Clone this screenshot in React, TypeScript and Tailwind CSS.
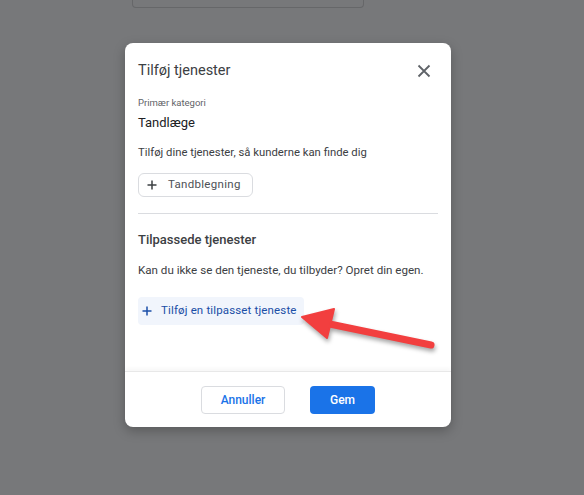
export default function App() {
  return (
    <div className="relative w-[584px] h-[495px] bg-[#77787a] overflow-hidden font-['Roboto',sans-serif]">
      <div className="ml-[132px] w-[232px] h-[8px] border border-t-0 border-[#666769] rounded-b-[4px]"></div>

      <div className="ml-[125px] mt-[35px] w-[326px] bg-white rounded-[8px] shadow-[0_4px_12px_rgba(0,0,0,0.25)]">
        <div className="px-[13px] pt-[18px] pb-[46px]">
          <div className="flex items-center justify-between h-5">
            <h2 className="text-[14.5px] leading-5 text-[#3c4043]">Tilføj tjenester</h2>
            <svg width="14" height="14" viewBox="0 0 14 14" className="mr-[7px]">
              <path d="M1.5 1.5 L12.5 12.5 M12.5 1.5 L1.5 12.5" stroke="#5f6368" strokeWidth="1.8" />
            </svg>
          </div>

          <p className="mt-[15px] text-[9.5px] leading-[14px] text-[#5f6368]">Primær kategori</p>
          <p className="mt-[3px] text-[13px] leading-5 text-[#202124]">Tandlæge</p>
          <p className="mt-[12px] text-[11.3px] leading-4 text-[#3c4043]">
            Tilføj dine tjenester, så kunderne kan finde dig
          </p>

          <div className="mt-[12px] flex">
            <div className="flex items-center h-6 pl-[8px] pr-[11px] border border-[#dadce0] rounded-[6px] gap-[11px]">
              <svg width="10" height="10" viewBox="0 0 10 10">
                <path d="M5 0.5 V9.5 M0.5 5 H9.5" stroke="#3c4043" strokeWidth="1.5" />
              </svg>
              <span className="text-[11.5px] text-[#4d5156] tracking-[0.3px]">Tandblegning</span>
            </div>
          </div>

          <div className="mt-[16px] h-px bg-[#dadce0]"></div>

          <h3 className="mt-[16px] text-[13px] leading-5 font-medium text-[#3c4043]">Tilpassede tjenester</h3>
          <p className="mt-[12px] text-[11.6px] leading-4 text-[#3c4043]">
            Kan du ikke se den tjeneste, du tilbyder? Opret din egen.
          </p>

          <div className="mt-[19px] flex">
            <div className="flex items-center h-7 pl-[4px] pr-[7px] bg-[#f1f5fc] rounded-[4px] gap-[9px]">
              <svg width="10" height="10" viewBox="0 0 10 10">
                <path d="M5 0.5 V9.5 M0.5 5 H9.5" stroke="#1b4fa8" strokeWidth="1.5" />
              </svg>
              <span className="text-[11.5px] text-[#1a4ea6] tracking-[0.15px]">Tilføj en tilpasset tjeneste</span>
            </div>
          </div>
        </div>

        <div className="h-[56px] border-t border-[#e8e8e8] shadow-[0_-3px_4px_rgba(0,0,0,0.03)] flex items-center justify-center gap-[25px]">
          <button className="w-[84px] h-7 border border-[#dadce0] rounded-[4px] text-[12px] font-medium text-[#1a73e8]">
            Annuller
          </button>
          <button className="w-[65px] h-7 bg-[#1a73e8] rounded-[4px] text-[12px] font-medium text-white">
            Gem
          </button>
        </div>
      </div>

      <svg
        className="absolute left-0 top-0 pointer-events-none"
        width="584"
        height="495"
        style={{ filter: 'drop-shadow(1px 3px 2px rgba(0,0,0,0.35))' }}
      >
        <line x1="320" y1="322" x2="431" y2="345" stroke="#f23f3f" strokeWidth="7" strokeLinecap="round" />
        <path d="M302 317 L334 309 L327 338 Z" fill="#f23f3f" stroke="#f23f3f" strokeWidth="2" strokeLinejoin="round" />
      </svg>
    </div>
  );
}
